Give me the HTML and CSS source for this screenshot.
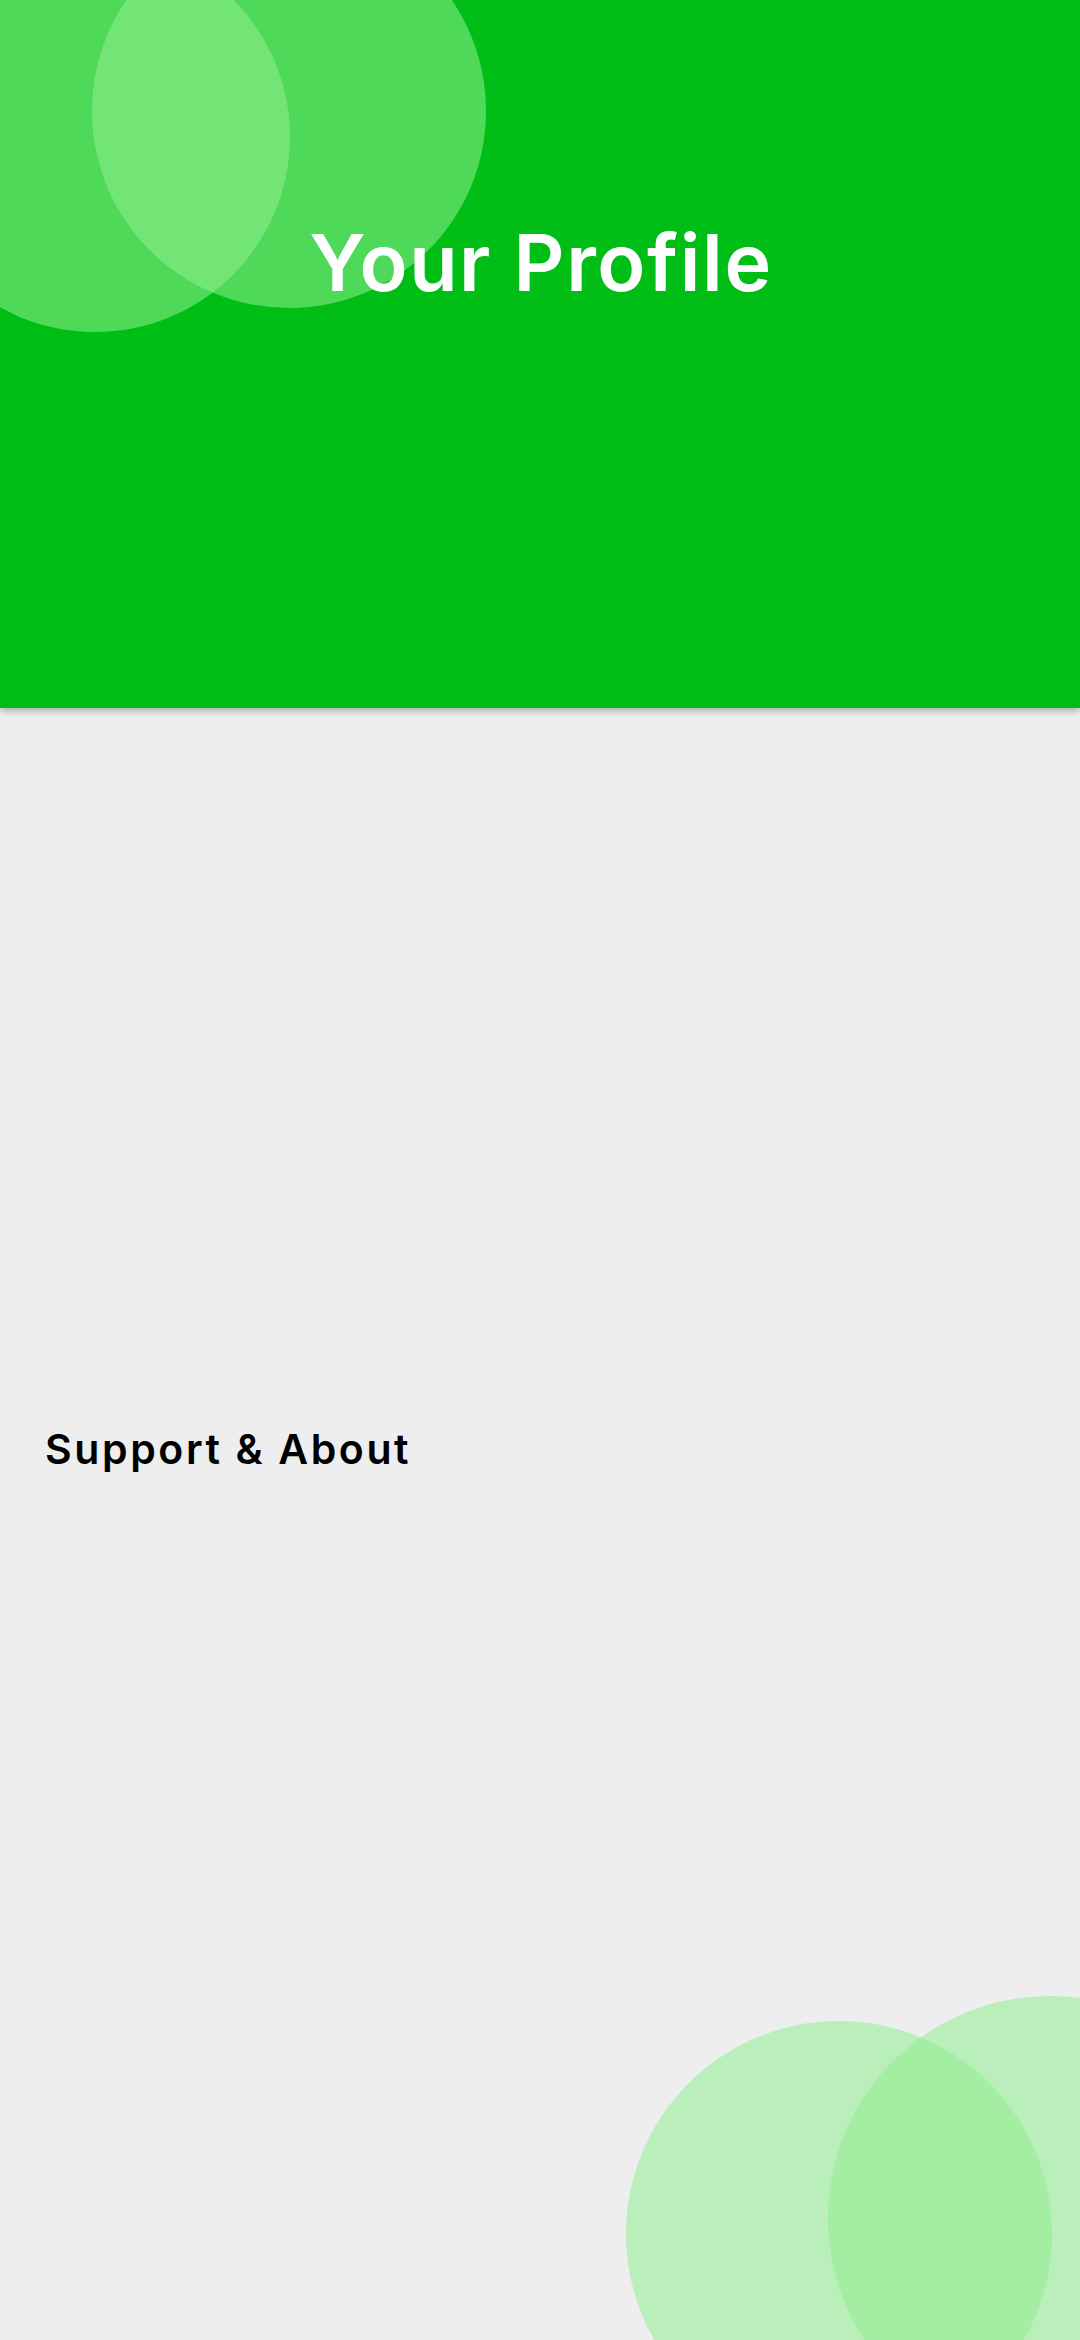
FILE: index.html
```html
<!DOCTYPE html>
<html lang="en">
<head>
<meta charset="utf-8">
<title>Your Profile</title>
<link rel="stylesheet" href="styles.css">
</head>
<body>
<div class="page">
  <header class="header">
    <span class="blob blob-a"></span>
    <span class="blob blob-b"></span>
    <h1 class="title">Your Profile</h1>
  </header>
  <main class="content">
    <h2 class="section-title">Support &amp; About</h2>
  </main>
  <span class="blob blob-c"></span>
  <span class="blob blob-d"></span>
</div>
</body>
</html>
```

FILE: styles.css
```css
html, body {
  margin: 0;
  padding: 0;
}
body {
  background: #eeeeee;
  font-family: "Inter", "Lato", "Liberation Sans", sans-serif;
}
.page {
  position: relative;
  width: 1080px;
  height: 2340px;
  overflow: hidden;
  background: #eeeeee;
}
.header {
  position: relative;
  z-index: 1;
  height: 708px;
  background: #00be16;
  box-shadow: 0 3px 7px rgba(0, 0, 0, 0.28);
  overflow: hidden;
}
.blob {
  position: absolute;
  border-radius: 50%;
  background: rgba(144, 238, 144, 0.55);
}
.blob-a {
  left: -100px;
  top: -58px;
  width: 390px;
  height: 390px;
}
.blob-b {
  left: 92px;
  top: -86px;
  width: 394px;
  height: 394px;
}
.blob-c {
  left: 626px;
  top: 2021px;
  width: 426px;
  height: 426px;
}
.blob-d {
  left: 828px;
  top: 1996px;
  width: 444px;
  height: 444px;
}
.title {
  position: relative;
  margin: 0;
  padding-top: 223px;
  padding-left: 2px;
  text-align: center;
  color: #ffffff;
  font-size: 79px;
  font-weight: 600;
  line-height: 1;
  letter-spacing: 1.6px;
}
.content {
  padding: 721px 45px 0;
}
.section-title {
  margin: 0;
  color: #000000;
  font-size: 41px;
  font-weight: 600;
  line-height: 1;
  letter-spacing: 2.6px;
}
```
